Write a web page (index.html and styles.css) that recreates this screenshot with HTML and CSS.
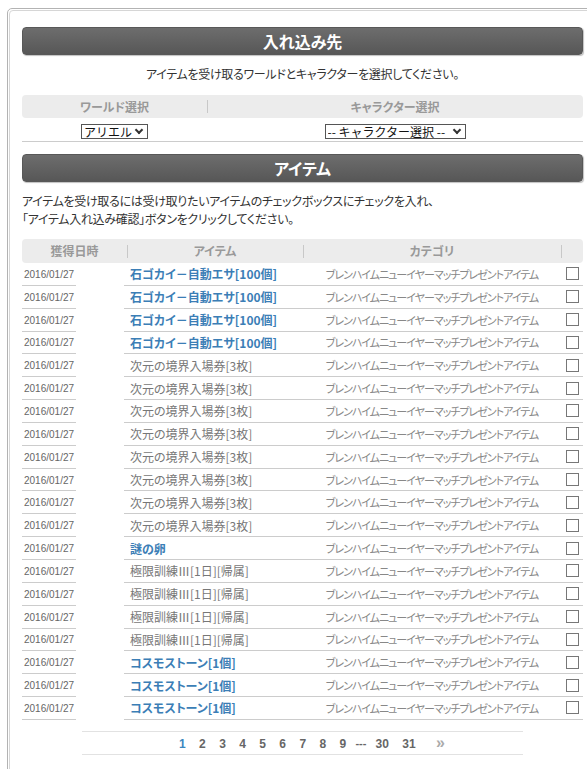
FILE: index.html
```html
<!DOCTYPE html>
<html lang="ja">
<head>
  <meta charset="UTF-8" />
  <meta name="viewport" content="width=device-width, initial-scale=1.0"/>
  <title>アイテム入れ込み</title>
  <link rel="stylesheet" href="styles.css">
</head>
<body>
  <div class="frame">
    <div class="frame-inner">

      <h2 class="bar">入れ込み先</h2>
      <p class="lead">アイテムを受け取るワールドとキャラクターを選択してください。</p>

      <div class="target">
        <div class="target-head">
          <div class="th">ワールド選択</div>
          <div class="th sep">キャラクター選択</div>
        </div>
        <div class="target-body">
          <div class="td">
            <span class="pick">
              <select class="world">
                <option>アリエル</option>
              </select>
            </span>
          </div>
          <div class="td">
            <span class="pick">
              <select class="chara">
                <option>-- キャラクター選択 --</option>
              </select>
            </span>
          </div>
        </div>
      </div>

      <h2 class="bar second">アイテム</h2>
      <p class="note">
        アイテムを受け取るには受け取りたいアイテムのチェックボックスにチェックを入れ、<br>
        「アイテム入れ込み確認」ボタンをクリックしてください。
      </p>

      <div class="items">
        <div class="items-head">
          <div class="th col-date">獲得日時</div>
          <div class="th col-name sep">アイテム</div>
          <div class="th col-cat sep">カテゴリ</div>
          <div class="th col-chk sep"></div>
        </div>
        <div id="itemRows"></div>
      </div>

      <div class="pager">
        <a class="on">1</a><a>2</a><a>3</a><a>4</a><a>5</a><a>6</a><a>7</a><a>8</a><a>9</a><span class="dots">---</span><a>30</a><a>31</a><a class="next">»</a>
      </div>

    </div>
  </div>

  <script>
    const CATEGORY = "ブレンハイムニューイヤーマッチプレゼントアイテム";
    const DATE = "2016/01/27";

    // [アイテム名, 強調表示, 件数]
    const groups = [
      ["石ゴカイ－自動エサ[100個]", true, 4],
      ["次元の境界入場券[3枚]", false, 8],
      ["謎の卵", true, 1],
      ["極限訓練Ⅲ[1日][帰属]", false, 4],
      ["コスモストーン[1個]", true, 3],
    ];

    const itemRows = document.getElementById("itemRows");

    for (const [name, hot, count] of groups) {
      for (let i = 0; i < count; i++) {
        const row = document.createElement("div");
        row.className = "row";

        const date = document.createElement("div");
        date.className = "date";
        date.textContent = DATE;

        const item = document.createElement("div");
        item.className = hot ? "name hot" : "name";
        item.textContent = name;

        const cat = document.createElement("div");
        cat.className = "cat";
        cat.textContent = CATEGORY;

        const chk = document.createElement("div");
        chk.className = "chk";
        const box = document.createElement("input");
        box.type = "checkbox";
        chk.appendChild(box);

        row.append(date, item, cat, chk);
        itemRows.appendChild(row);
      }
    }
  </script>
</body>
</html>
```

FILE: styles.css
```css
html, body {
  overflow: hidden;
}

body {
  margin: 0;
  font-family: "Noto Sans CJK JP", sans-serif;
  font-feature-settings: "palt";
  font-size: 12px;
  color: #333;
  background: #fff;
}

/* 外枠（二重線） */
.frame {
  margin: 8px 0 0 7px;
  width: 589px;
  border: 1px solid #b3b3b3;
  border-radius: 5px;
  padding: 1px;
}

.frame-inner {
  width: 561px;
  border: 1px solid #d6d6d6;
  border-radius: 4px;
  padding: 16px 12px 40px;
}

/* 見出しバー */
.bar {
  margin: 0;
  height: 28px;
  box-sizing: border-box;
  border: 1px solid #585858;
  border-radius: 4px;
  background: linear-gradient(#6d6d6d, #575757);
  box-shadow: 1px 1px 1px rgba(0,0,0,0.25);
  color: #fff;
  font-size: 16px;
  font-weight: bold;
  line-height: 26px;
  text-align: center;
}

.bar.second {
  margin-top: 12px;
}

.lead {
  margin: 10px 0 12px;
  line-height: 18px;
  text-align: center;
  letter-spacing: -0.3px;
}

.note {
  margin: 10px 0 11px;
  line-height: 18px;
  letter-spacing: -0.3px;
}

/* 見出し行の共通スタイル */
.th {
  color: #999;
  font-weight: bold;
  text-align: center;
}

.th.sep {
  background: linear-gradient(#c8c8c8, #c8c8c8) left center / 1px 13px no-repeat;
}

/* 入れ込み先 */
.target-head {
  display: grid;
  grid-template-columns: 185px 376px;
  height: 23px;
  line-height: 23px;
  background: #ececec;
  border-radius: 4px;
}

.target-body {
  display: grid;
  grid-template-columns: 185px 376px;
  height: 23px;
  border-bottom: 1px solid #ccc;
  align-items: center;
  text-align: center;
}

.pick {
  display: inline-block;
  position: relative;
  vertical-align: middle;
}

.pick select {
  appearance: none;
  -webkit-appearance: none;
  display: block;
  height: 15px;
  margin: 0;
  padding: 0 0 0 2px;
  border: 1px solid #555;
  border-radius: 0;
  background: #fff;
  color: #111;
  font-family: inherit;
  font-size: 12px;
  line-height: 13px;
  box-sizing: border-box;
}

.pick .world {
  width: 67px;
}

.pick .chara {
  width: 141px;
}

/* プルダウンの矢印 */
.pick::after {
  content: "";
  position: absolute;
  right: 6px;
  top: 3px;
  width: 4px;
  height: 4px;
  border-right: 2px solid #333;
  border-bottom: 2px solid #333;
  transform: rotate(45deg);
  pointer-events: none;
}

/* アイテム一覧 */
.items-head {
  display: grid;
  grid-template-columns: 105px 176px 258px 22px;
  height: 24px;
  line-height: 24px;
  background: #ececec;
  border-radius: 4px;
}

.row {
  display: flex;
  height: 22.85px;
}

.row > div {
  display: flex;
  align-items: center;
  box-sizing: border-box;
  border-bottom: 1px solid #ccc;
}

.date {
  width: 54px;
  margin-right: 48px;
  padding: 1px 0 0 2px;
  font-family: "Liberation Sans", sans-serif;
  font-size: 10px;
  color: #666;
}

.name {
  width: 179px;
  padding-left: 6px;
  color: #777;
  white-space: nowrap;
}

.name.hot {
  color: #3b7eb6;
  font-weight: bold;
}

.cat {
  width: 258px;
  justify-content: center;
  font-size: 11px;
  letter-spacing: -1px;
  color: #888;
  white-space: nowrap;
}

.chk {
  width: 22px;
  justify-content: center;
}

.chk input {
  appearance: none;
  -webkit-appearance: none;
  width: 13px;
  height: 13px;
  margin: 0 0 0 1px;
  border: 1px solid #777;
  background: #fff;
}

/* ページ送り */
.pager {
  width: 441px;
  margin: 11px auto 0;
  padding-left: 19px;
  box-sizing: border-box;
  height: 24px;
  border-top: 1px solid #e2e2e2;
  border-bottom: 1px solid #e2e2e2;
  line-height: 22px;
  text-align: center;
  font-family: "Liberation Sans", sans-serif;
  font-size: 12px;
  font-weight: bold;
  color: #666;
}

.pager a {
  display: inline-block;
  padding: 0 6.7px;
  cursor: pointer;
}

.pager a.on {
  color: #3d87c0;
}

.pager .dots {
  display: inline-block;
  margin: 0 2.5px;
  font-size: 11px;
  vertical-align: top;
}

.pager a.next {
  margin-left: 7px;
  color: #aaa;
  font-size: 16px;
}
```
